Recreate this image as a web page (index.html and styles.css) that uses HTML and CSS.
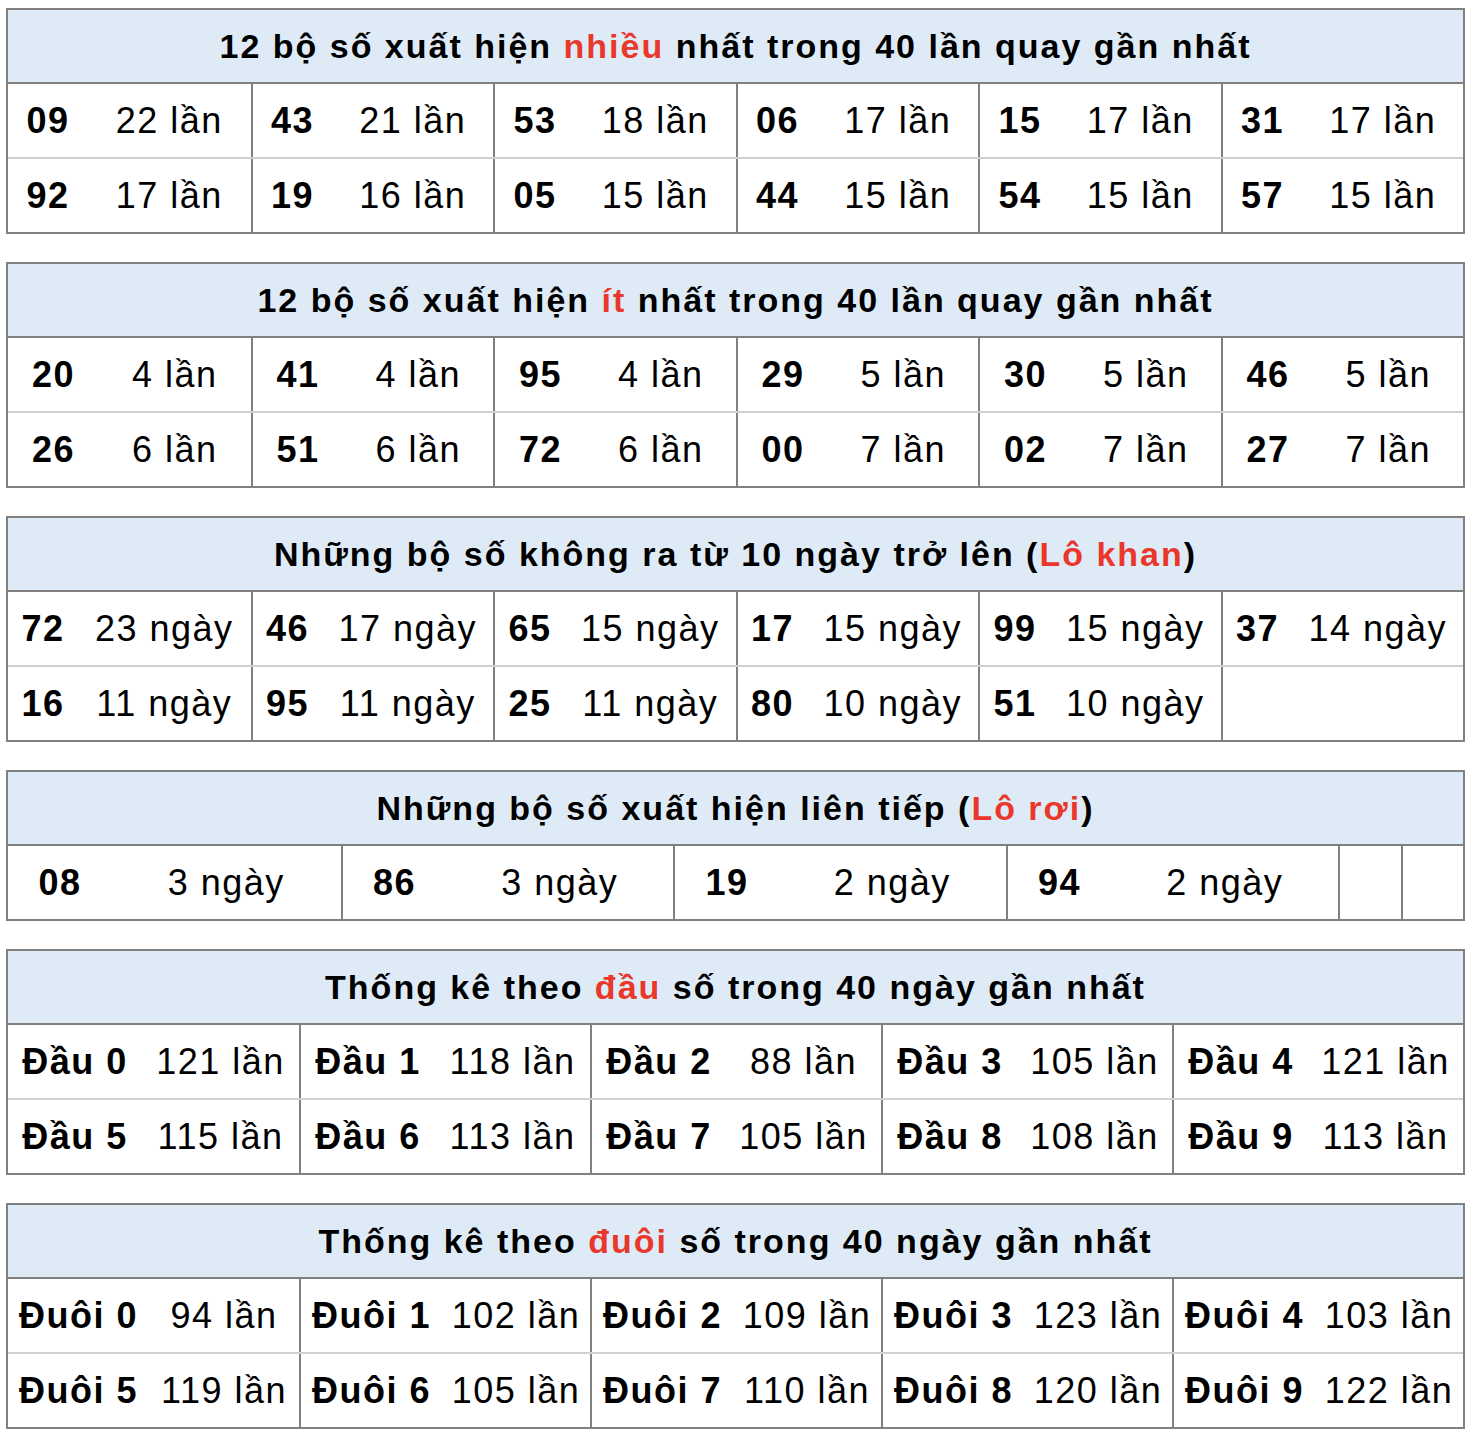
FILE: index.html
```html
<!DOCTYPE html>
<html lang="vi">
<head>
<meta charset="utf-8">
<title>Thống kê lô tô</title>
<link rel="stylesheet" href="styles.css">
</head>
<body>
<main class="page">
  <section class="stat stat--most">
    <h2 class="stat__head">12 bộ số xuất hiện <span class="hl">nhiều</span> nhất trong 40 lần quay gần nhất</h2>
    <div class="stat__row">
      <div class="pair"><b class="pair__num">09</b><span class="pair__val">22 lần</span></div>
      <div class="pair"><b class="pair__num">43</b><span class="pair__val">21 lần</span></div>
      <div class="pair"><b class="pair__num">53</b><span class="pair__val">18 lần</span></div>
      <div class="pair"><b class="pair__num">06</b><span class="pair__val">17 lần</span></div>
      <div class="pair"><b class="pair__num">15</b><span class="pair__val">17 lần</span></div>
      <div class="pair"><b class="pair__num">31</b><span class="pair__val">17 lần</span></div>
    </div>
    <div class="stat__row">
      <div class="pair"><b class="pair__num">92</b><span class="pair__val">17 lần</span></div>
      <div class="pair"><b class="pair__num">19</b><span class="pair__val">16 lần</span></div>
      <div class="pair"><b class="pair__num">05</b><span class="pair__val">15 lần</span></div>
      <div class="pair"><b class="pair__num">44</b><span class="pair__val">15 lần</span></div>
      <div class="pair"><b class="pair__num">54</b><span class="pair__val">15 lần</span></div>
      <div class="pair"><b class="pair__num">57</b><span class="pair__val">15 lần</span></div>
    </div>
  </section>

  <section class="stat stat--least">
    <h2 class="stat__head">12 bộ số xuất hiện <span class="hl">ít</span> nhất trong 40 lần quay gần nhất</h2>
    <div class="stat__row">
      <div class="pair"><b class="pair__num">20</b><span class="pair__val">4 lần</span></div>
      <div class="pair"><b class="pair__num">41</b><span class="pair__val">4 lần</span></div>
      <div class="pair"><b class="pair__num">95</b><span class="pair__val">4 lần</span></div>
      <div class="pair"><b class="pair__num">29</b><span class="pair__val">5 lần</span></div>
      <div class="pair"><b class="pair__num">30</b><span class="pair__val">5 lần</span></div>
      <div class="pair"><b class="pair__num">46</b><span class="pair__val">5 lần</span></div>
    </div>
    <div class="stat__row">
      <div class="pair"><b class="pair__num">26</b><span class="pair__val">6 lần</span></div>
      <div class="pair"><b class="pair__num">51</b><span class="pair__val">6 lần</span></div>
      <div class="pair"><b class="pair__num">72</b><span class="pair__val">6 lần</span></div>
      <div class="pair"><b class="pair__num">00</b><span class="pair__val">7 lần</span></div>
      <div class="pair"><b class="pair__num">02</b><span class="pair__val">7 lần</span></div>
      <div class="pair"><b class="pair__num">27</b><span class="pair__val">7 lần</span></div>
    </div>
  </section>

  <section class="stat stat--khan">
    <h2 class="stat__head">Những bộ số không ra từ 10 ngày trở lên (<span class="hl">Lô khan</span>)</h2>
    <div class="stat__row">
      <div class="pair"><b class="pair__num">72</b><span class="pair__val">23 ngày</span></div>
      <div class="pair"><b class="pair__num">46</b><span class="pair__val">17 ngày</span></div>
      <div class="pair"><b class="pair__num">65</b><span class="pair__val">15 ngày</span></div>
      <div class="pair"><b class="pair__num">17</b><span class="pair__val">15 ngày</span></div>
      <div class="pair"><b class="pair__num">99</b><span class="pair__val">15 ngày</span></div>
      <div class="pair"><b class="pair__num">37</b><span class="pair__val">14 ngày</span></div>
    </div>
    <div class="stat__row">
      <div class="pair"><b class="pair__num">16</b><span class="pair__val">11 ngày</span></div>
      <div class="pair"><b class="pair__num">95</b><span class="pair__val">11 ngày</span></div>
      <div class="pair"><b class="pair__num">25</b><span class="pair__val">11 ngày</span></div>
      <div class="pair"><b class="pair__num">80</b><span class="pair__val">10 ngày</span></div>
      <div class="pair"><b class="pair__num">51</b><span class="pair__val">10 ngày</span></div>
      <div class="pair"><b class="pair__num"></b><span class="pair__val"></span></div>
    </div>
  </section>

  <section class="stat stat--roi">
    <h2 class="stat__head">Những bộ số xuất hiện liên tiếp (<span class="hl">Lô rơi</span>)</h2>
    <div class="stat__row">
      <div class="pair"><b class="pair__num">08</b><span class="pair__val">3 ngày</span></div>
      <div class="pair"><b class="pair__num">86</b><span class="pair__val">3 ngày</span></div>
      <div class="pair"><b class="pair__num">19</b><span class="pair__val">2 ngày</span></div>
      <div class="pair"><b class="pair__num">94</b><span class="pair__val">2 ngày</span></div>
      <div class="pair pair--empty"></div>
      <div class="pair pair--empty"></div>
    </div>
  </section>

  <section class="stat stat--dau">
    <h2 class="stat__head">Thống kê theo <span class="hl">đầu</span> số trong 40 ngày gần nhất</h2>
    <div class="stat__row">
      <div class="pair"><b class="pair__num">Đầu 0</b><span class="pair__val">121 lần</span></div>
      <div class="pair"><b class="pair__num">Đầu 1</b><span class="pair__val">118 lần</span></div>
      <div class="pair"><b class="pair__num">Đầu 2</b><span class="pair__val">88 lần</span></div>
      <div class="pair"><b class="pair__num">Đầu 3</b><span class="pair__val">105 lần</span></div>
      <div class="pair"><b class="pair__num">Đầu 4</b><span class="pair__val">121 lần</span></div>
    </div>
    <div class="stat__row">
      <div class="pair"><b class="pair__num">Đầu 5</b><span class="pair__val">115 lần</span></div>
      <div class="pair"><b class="pair__num">Đầu 6</b><span class="pair__val">113 lần</span></div>
      <div class="pair"><b class="pair__num">Đầu 7</b><span class="pair__val">105 lần</span></div>
      <div class="pair"><b class="pair__num">Đầu 8</b><span class="pair__val">108 lần</span></div>
      <div class="pair"><b class="pair__num">Đầu 9</b><span class="pair__val">113 lần</span></div>
    </div>
  </section>

  <section class="stat stat--duoi">
    <h2 class="stat__head">Thống kê theo <span class="hl">đuôi</span> số trong 40 ngày gần nhất</h2>
    <div class="stat__row">
      <div class="pair"><b class="pair__num">Đuôi 0</b><span class="pair__val">94 lần</span></div>
      <div class="pair"><b class="pair__num">Đuôi 1</b><span class="pair__val">102 lần</span></div>
      <div class="pair"><b class="pair__num">Đuôi 2</b><span class="pair__val">109 lần</span></div>
      <div class="pair"><b class="pair__num">Đuôi 3</b><span class="pair__val">123 lần</span></div>
      <div class="pair"><b class="pair__num">Đuôi 4</b><span class="pair__val">103 lần</span></div>
    </div>
    <div class="stat__row">
      <div class="pair"><b class="pair__num">Đuôi 5</b><span class="pair__val">119 lần</span></div>
      <div class="pair"><b class="pair__num">Đuôi 6</b><span class="pair__val">105 lần</span></div>
      <div class="pair"><b class="pair__num">Đuôi 7</b><span class="pair__val">110 lần</span></div>
      <div class="pair"><b class="pair__num">Đuôi 8</b><span class="pair__val">120 lần</span></div>
      <div class="pair"><b class="pair__num">Đuôi 9</b><span class="pair__val">122 lần</span></div>
    </div>
  </section>
</main>
</body>
</html>
```

FILE: styles.css
```css
html, body {
  margin: 0;
  padding: 0;
  background: #ffffff;
}

body {
  font-family: "Liberation Sans", Arial, sans-serif;
  color: #000000;
}

.page {
  display: flex;
  flex-direction: column;
  gap: 28px;
  padding: 8px 0 0 6px;
}

.stat {
  width: 1459px;
  box-sizing: border-box;
  border: 2px solid #808080;
  --num: 80px;
}

.stat--most  { --num: 80px; }
.stat--least { --num: 91px; }
.stat--khan  { --num: 70px; }
.stat--roi   { --num: 104px; }
.stat--dau   { --num: 134px; }
.stat--duoi  { --num: 141px; }

.stat__head {
  margin: 0;
  height: 74px;
  box-sizing: border-box;
  border-bottom: 2px solid #808080;
  background: #deebf7;
  text-align: center;
  line-height: 73px;
  font-size: 34px;
  font-weight: bold;
  letter-spacing: 2px;
  white-space: nowrap;
}

.hl {
  color: #e9382b;
}

.stat__row {
  display: grid;
  grid-template-columns: repeat(6, 1fr);
  height: 75px;
  box-sizing: border-box;
  border-bottom: 2px solid #d0d0d0;
  font-size: 36px;
  letter-spacing: 1.5px;
}

.stat__row:last-child {
  height: 73px;
  border-bottom: none;
}

.stat--roi .stat__row {
  grid-template-columns: repeat(4, 1fr) 63px 62px;
}

.stat--dau .stat__row,
.stat--duoi .stat__row {
  grid-template-columns: repeat(5, 1fr);
}

.pair {
  display: flex;
  align-items: center;
  min-width: 0;
  border-left: 2px solid #808080;
  white-space: nowrap;
}

.pair:first-child {
  border-left: none;
}

.pair__num {
  flex: 0 0 var(--num);
  text-align: center;
  font-weight: bold;
}

.pair__val {
  flex: 1 1 auto;
  text-align: center;
}
```
